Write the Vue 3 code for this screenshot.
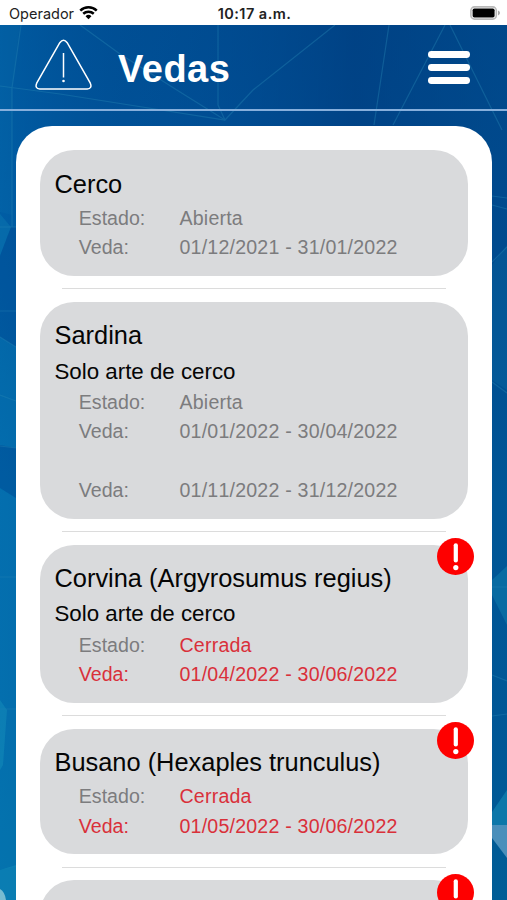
<script setup>
const vedas = [
  {
    name: 'Cerco',
    status: 'Abierta',
    periods: ['01/12/2021 - 31/01/2022']
  },
  {
    name: 'Sardina',
    note: 'Solo arte de cerco',
    status: 'Abierta',
    periods: ['01/01/2022 - 30/04/2022', '01/11/2022 - 31/12/2022']
  },
  {
    name: 'Corvina (Argyrosumus regius)',
    note: 'Solo arte de cerco',
    status: 'Cerrada',
    closed: true,
    periods: ['01/04/2022 - 30/06/2022']
  },
  {
    name: 'Busano (Hexaples trunculus)',
    status: 'Cerrada',
    closed: true,
    periods: ['01/05/2022 - 30/06/2022']
  },
  {
    name: '',
    closed: true,
    periods: []
  }
]
</script>

<template>
  <div class="screen">
    <svg class="backdrop" viewBox="0 0 507 900" preserveAspectRatio="none">
      <defs>
        <linearGradient id="sea" x1="0" y1="0" x2="0" y2="1">
          <stop offset="0" stop-color="#004d91" />
          <stop offset="0.3" stop-color="#00549b" />
          <stop offset="0.55" stop-color="#0069a9" />
          <stop offset="0.8" stop-color="#006aa8" />
          <stop offset="1" stop-color="#0075a8" />
        </linearGradient>
        <linearGradient id="shade" x1="0" y1="0" x2="1" y2="0">
          <stop offset="0" stop-color="#0068b0" stop-opacity="0.5" />
          <stop offset="0.25" stop-color="#00509a" stop-opacity="0.2" />
          <stop offset="0.7" stop-color="#003a7c" stop-opacity="0.6" />
          <stop offset="1" stop-color="#004080" stop-opacity="0.45" />
        </linearGradient>
      </defs>
      <rect width="507" height="900" fill="url(#sea)" />
      <rect width="507" height="900" fill="url(#shade)" />
      <g fill="#1c9cc0">
        <path d="M0 25H20L12 88V215L0 212Z" opacity="0.08" />
        <path d="M0 214L11 227L0 256Z" opacity="0.22" />
        <path d="M0 337L16 347V448L0 445Z" opacity="0.12" />
        <path d="M0 488L16 498V867L0 870Z" opacity="0.13" />
        <path d="M0 700L7 710L3 765L0 770Z" opacity="0.35" />
        <path d="M0 870L16 865V900H0Z" opacity="0.35" />
        <path d="M492 265L507 245V390L492 380Z" opacity="0.13" />
        <path d="M492 580L507 566V625L492 595Z" opacity="0.3" />
        <path d="M492 812L507 790V825H492Z" opacity="0.45" />
      </g>
      <path d="M492 825H507V858L492 838Z" fill="#7cb3d3" opacity="0.6" />
      <path d="M0 889Q5 892 6 900H0Z" fill="#a7d7de" opacity="0.7" />
      <path d="M0 256L11 227H16V347L0 337Z" fill="#003f88" opacity="0.28" />
      <path d="M0 445L16 448V498L0 488Z" fill="#003f88" opacity="0.3" />
      <g class="mesh">
        <path d="M21 25L12 88V227" />
        <path d="M80 25L120 54L180 92L225 120" />
        <path d="M0 86L60 94L225 120L253 90L335 25" />
        <path d="M218 25V105L225 120" />
        <path d="M389 25L374 125" />
        <path d="M393 125L445 25" />
        <path d="M450 25L502 130" />
        <path d="M0 227H16M0 311H16M0 337L16 347M0 395L16 401M0 446L16 448M0 577H16M0 709H16" />
        <path d="M492 196L507 198M492 205L507 209M492 262L507 247M492 382L507 393M492 587H507M492 675L507 681M492 716L507 714" />
      </g>
    </svg>

    <div class="status-bar">
      <div class="carrier">
        <span>Operador</span>
        <svg class="wifi" viewBox="0 0 18 14">
          <path d="M1.2 5.2A11.3 11.3 0 0 1 16.8 5.2" />
          <path d="M4 8.2A7.3 7.3 0 0 1 14 8.2" />
          <path class="dot" d="M6.2 10.5A4 4 0 0 1 11.8 10.5L9 13.5Z" />
        </svg>
      </div>
      <div class="clock">10:17 a.m.</div>
      <div class="power">
        <svg class="battery" viewBox="0 0 31 14">
          <rect x="0.9" y="0.9" width="25.4" height="12.2" rx="3.6" fill="#fff" stroke="#b9b9b9" stroke-width="1.6" />
          <rect x="2.6" y="2.6" width="22" height="8.8" rx="1.7" fill="#000" />
          <path d="M28 4.6Q30 5.6 30 7T28 9.4Z" fill="#aaa" />
        </svg>
      </div>
    </div>

    <header class="header">
      <svg class="warning" viewBox="0 0 58 52">
        <path d="M24.8 3.7Q28.5 -1.3 32.2 3.7L55.3 44.2Q57.5 49.4 52.2 50H4.8Q-0.5 49.4 1.7 44.2Z" />
        <path d="M28.5 14V38.5" />
        <circle cx="28.5" cy="42" r="1.3" />
      </svg>
      <h1>Vedas</h1>
      <button class="menu" aria-label="Menu">
        <span></span>
        <span></span>
        <span></span>
      </button>
    </header>

    <main class="sheet">
      <div v-for="(veda, i) in vedas" :key="i" class="entry">
        <section class="card">
          <h2>{{ veda.name }}</h2>
          <p v-if="veda.note" class="note">{{ veda.note }}</p>
          <div v-if="veda.status" class="row">
            <span>Estado:</span>
            <span class="value" :class="{ closed: veda.closed }">{{ veda.status }}</span>
          </div>
          <div
            v-for="(period, n) in veda.periods"
            :key="period"
            class="row"
            :class="{ closed: veda.closed, extra: n > 0 }"
          >
            <span>Veda:</span>
            <span class="value">{{ period }}</span>
          </div>
          <svg v-if="veda.closed" class="badge" viewBox="0 0 37 37">
            <circle cx="18.5" cy="18.5" r="18.5" fill="#fe0000" />
            <path d="M18.8 7.3V22.5" stroke="#fff" stroke-width="4.2" stroke-linecap="round" />
            <circle cx="18.8" cy="29.6" r="2.6" fill="#fff" />
          </svg>
        </section>
        <div class="divider"></div>
      </div>
    </main>
  </div>
</template>

<style>
body {
  margin: 0;
  overflow: hidden;
}
</style>

<style scoped>
.screen {
  position: relative;
  display: flex;
  flex-direction: column;
  width: 100%;
  height: 100vh;
  overflow: hidden;
  font-family: "Liberation Sans", Arial, sans-serif;
}

.backdrop {
  position: absolute;
  top: 0;
  left: 0;
  width: 100%;
  height: 100%;
  z-index: -1;
}

.mesh {
  fill: none;
  stroke: #2585b3;
  stroke-width: 1.2;
  opacity: 0.4;
}

.status-bar {
  display: grid;
  grid-template-columns: 1fr auto 1fr;
  align-items: center;
  box-sizing: border-box;
  flex: none;
  height: 25px;
  padding: 2px 7px 0 9px;
  background: #fff;
  color: #222;
  font-family: Inter, sans-serif;
  font-size: 14.5px;
}

.carrier {
  display: flex;
  align-items: center;
  gap: 5px;
}

.wifi {
  width: 19px;
  height: 15px;
  margin-top: -2px;
  fill: none;
  stroke: #000;
  stroke-width: 2.4;
}

.wifi .dot {
  fill: #000;
  stroke: none;
}

.clock {
  font-weight: 600;
  letter-spacing: 0.45px;
}

.power {
  display: flex;
  justify-content: flex-end;
}

.battery {
  width: 31px;
  height: 14px;
  margin: -1px -1px 0 0;
}

.header {
  display: flex;
  align-items: center;
  box-sizing: border-box;
  flex: none;
  height: 86px;
  padding: 0 37.5px 0 35px;
  border-bottom: 2px solid #86afdc;
}

.warning {
  width: 58px;
  height: 52px;
  margin-top: -4px;
  fill: none;
  stroke: #fff;
  stroke-width: 1.5;
}

.warning circle {
  fill: #fff;
  stroke: none;
}

h1 {
  flex: 1;
  margin: 3px 0 0 25px;
  color: #fff;
  font-size: 38px;
  line-height: 44px;
  letter-spacing: 0.5px;
}

.menu {
  display: flex;
  flex-direction: column;
  gap: 6px;
  width: 41.5px;
  margin-top: 1px;
  padding: 0;
  border: 0;
  background: none;
}

.menu span {
  height: 6.7px;
  border-radius: 3.4px;
  background: #fff;
}

.sheet {
  flex: none;
  height: 830px;
  box-sizing: border-box;
  margin: 14.5px 15px 0 15.5px;
  padding: 24.8px 24.5px 0;
  border-radius: 36px 36px 0 0;
  background: #fff;
}

.card {
  position: relative;
  box-sizing: border-box;
  min-height: 125.6px;
  padding: 14.4px 14px 13.2px 14.5px;
  border-radius: 34px;
  background: #d9dadc;
}

h2 {
  height: 39.4px;
  margin: 0;
  color: #050505;
  font-size: 25.4px;
  font-weight: 400;
  line-height: 38.8px;
  white-space: nowrap;
}

.note {
  margin: 0;
  color: #050505;
  font-size: 22.3px;
  line-height: 32.4px;
}

.row {
  display: grid;
  grid-template-columns: 100.7px 1fr;
  padding-left: 24.3px;
  color: #7c7c7e;
  font-size: 19.6px;
  line-height: 29.3px;
}

.row.extra {
  margin-top: 29.3px;
}

.value {
  letter-spacing: 0.2px;
  font-kerning: none;
}

.row.closed,
.value.closed {
  color: #d9303a;
}

.badge {
  position: absolute;
  top: -6.5px;
  right: -6.5px;
  width: 37px;
  height: 37px;
}

.divider {
  height: 1px;
  margin: 12.4px 22px 12.7px;
  background: #dcdcdc;
}
</style>
